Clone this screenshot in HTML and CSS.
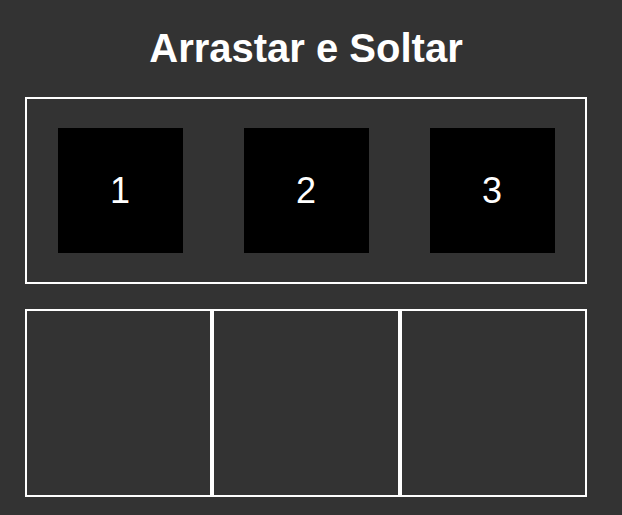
FILE: index.html
```html
<!DOCTYPE html>
<html lang="pt">
<head>
<meta charset="utf-8">
<title>Arrastar e Soltar</title>
<link rel="stylesheet" href="styles.css">
</head>
<body>
  <h1 class="title">Arrastar e Soltar</h1>
  <div class="source">
    <div class="item" draggable="true">1</div>
    <div class="item" draggable="true">2</div>
    <div class="item" draggable="true">3</div>
  </div>
  <div class="targets">
    <div class="slot"></div>
    <div class="slot"></div>
    <div class="slot"></div>
  </div>
</body>
</html>
```

FILE: styles.css
```css
* {
  box-sizing: border-box;
}

html, body {
  margin: 0;
  padding: 0;
  background: #333333;
}

body {
  width: 622px;
  height: 515px;
  overflow: hidden;
  font-family: "Liberation Sans", Arial, sans-serif;
  color: #ffffff;
}

.title {
  margin: 26px 0 26px;
  font-size: 40px;
  line-height: 45px;
  font-weight: bold;
  text-align: center;
  padding-right: 10px;
}

.source {
  margin-left: 25px;
  width: 562px;
  height: 187px;
  border: 2px solid #ffffff;
  display: flex;
  justify-content: space-around;
  align-items: center;
}

.item {
  width: 125px;
  height: 125px;
  background: #000000;
  display: flex;
  align-items: center;
  justify-content: center;
  font-size: 36px;
  color: #ffffff;
}

.targets {
  margin: 25px 0 0 25px;
  width: 562px;
  display: grid;
  grid-template-columns: repeat(3, 1fr);
}

.slot {
  height: 188px;
  border: 2px solid #ffffff;
}
```
